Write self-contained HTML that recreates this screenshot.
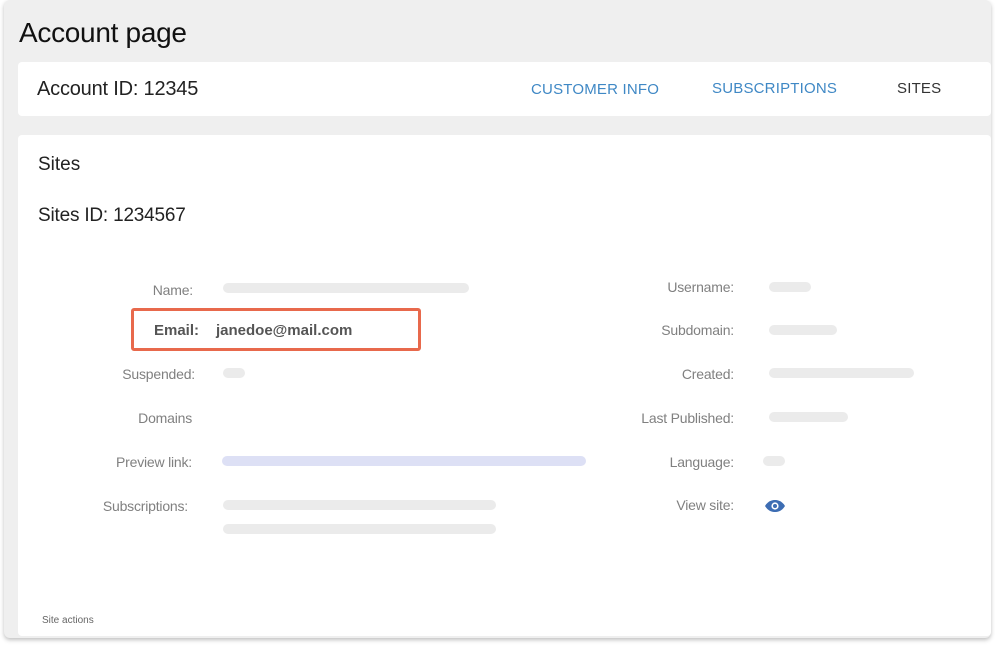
<!DOCTYPE html>
<html><head><style>
*{margin:0;padding:0;box-sizing:border-box}
body{width:995px;height:646px;background:#fff;font-family:"Liberation Sans",sans-serif;position:relative;overflow:hidden}
.outer{position:absolute;left:4px;top:0;width:987px;height:638px;background:#efefef;border-radius:6px;box-shadow:0 2px 4px rgba(0,0,0,.25)}
.card{position:absolute;background:#fff;border-radius:4px}
.t{position:absolute;white-space:nowrap;color:#222}
.l{position:absolute;white-space:nowrap;color:#808080;font-size:14px;text-align:right;width:200px;letter-spacing:-.2px}
.b{position:absolute;height:10px;border-radius:5px;background:#ebebeb}
.nav{position:absolute;font-size:15px;letter-spacing:.2px;white-space:nowrap}
</style></head><body>
<div class="outer"></div>
<div class="t" style="left:19px;top:17px;font-size:28px;color:#111;letter-spacing:-.3px">Account page</div>
<div class="card" style="left:18px;top:62px;width:973px;height:54px"></div>
<div class="t" style="left:37px;top:78px;font-size:20px;letter-spacing:-.2px">Account ID: 12345</div>
<div class="nav" style="left:531px;top:81px;color:#3f88c5">CUSTOMER INFO</div>
<div class="nav" style="left:712px;top:80px;color:#3f88c5">SUBSCRIPTIONS</div>
<div class="nav" style="left:897px;top:80px;color:#333">SITES</div>
<div class="card" style="left:18px;top:135px;width:973px;height:501px"></div>
<div class="t" style="left:38px;top:154px;font-size:19px">Sites</div>
<div class="t" style="left:38px;top:205px;font-size:19px;letter-spacing:-.2px">Sites ID: 1234567</div>

<div class="l" style="left:-7px;top:282px">Name:</div>
<div class="b" style="left:223px;top:283px;width:246px"></div>
<div style="position:absolute;left:131px;top:308px;width:290px;height:43px;border:3px solid #e8694c;border-radius:3px"></div>
<div class="t" style="left:154px;top:322px;font-size:15px;font-weight:bold;color:#555">Email:</div>
<div class="t" style="left:216px;top:322px;font-size:15px;font-weight:bold;color:#555">janedoe@mail.com</div>
<div class="l" style="left:-5px;top:366px">Suspended:</div>
<div class="b" style="left:223px;top:368px;width:22px"></div>
<div class="l" style="left:-8px;top:410px">Domains</div>
<div class="l" style="left:-8px;top:454px">Preview link:</div>
<div class="b" style="left:222px;top:456px;width:364px;background:#dde0f5"></div>
<div class="l" style="left:-12px;top:498px">Subscriptions:</div>
<div class="b" style="left:223px;top:500px;width:273px"></div>
<div class="b" style="left:223px;top:524px;width:273px"></div>

<div class="l" style="left:534px;top:279px">Username:</div>
<div class="b" style="left:769px;top:282px;width:42px"></div>
<div class="l" style="left:534px;top:322px">Subdomain:</div>
<div class="b" style="left:769px;top:325px;width:68px"></div>
<div class="l" style="left:534px;top:366px">Created:</div>
<div class="b" style="left:769px;top:368px;width:145px"></div>
<div class="l" style="left:534px;top:410px">Last Published:</div>
<div class="b" style="left:769px;top:412px;width:79px"></div>
<div class="l" style="left:534px;top:454px">Language:</div>
<div class="b" style="left:763px;top:456px;width:22px"></div>
<div class="l" style="left:534px;top:497px">View site:</div>
<svg style="position:absolute;left:765px;top:500px" width="20" height="12" viewBox="0 0 20 12"><path d="M0 6C3 1 7 0 10 0s7 1 10 6c-3 5-7 6-10 6S3 11 0 6z" fill="#3d6db3"/><circle cx="10" cy="6" r="3.6" fill="#fff"/><circle cx="10" cy="6" r="2" fill="#3d6db3"/></svg>
<div class="t" style="left:42px;top:615px;font-size:10px;color:#666">Site actions</div>
</body></html>
